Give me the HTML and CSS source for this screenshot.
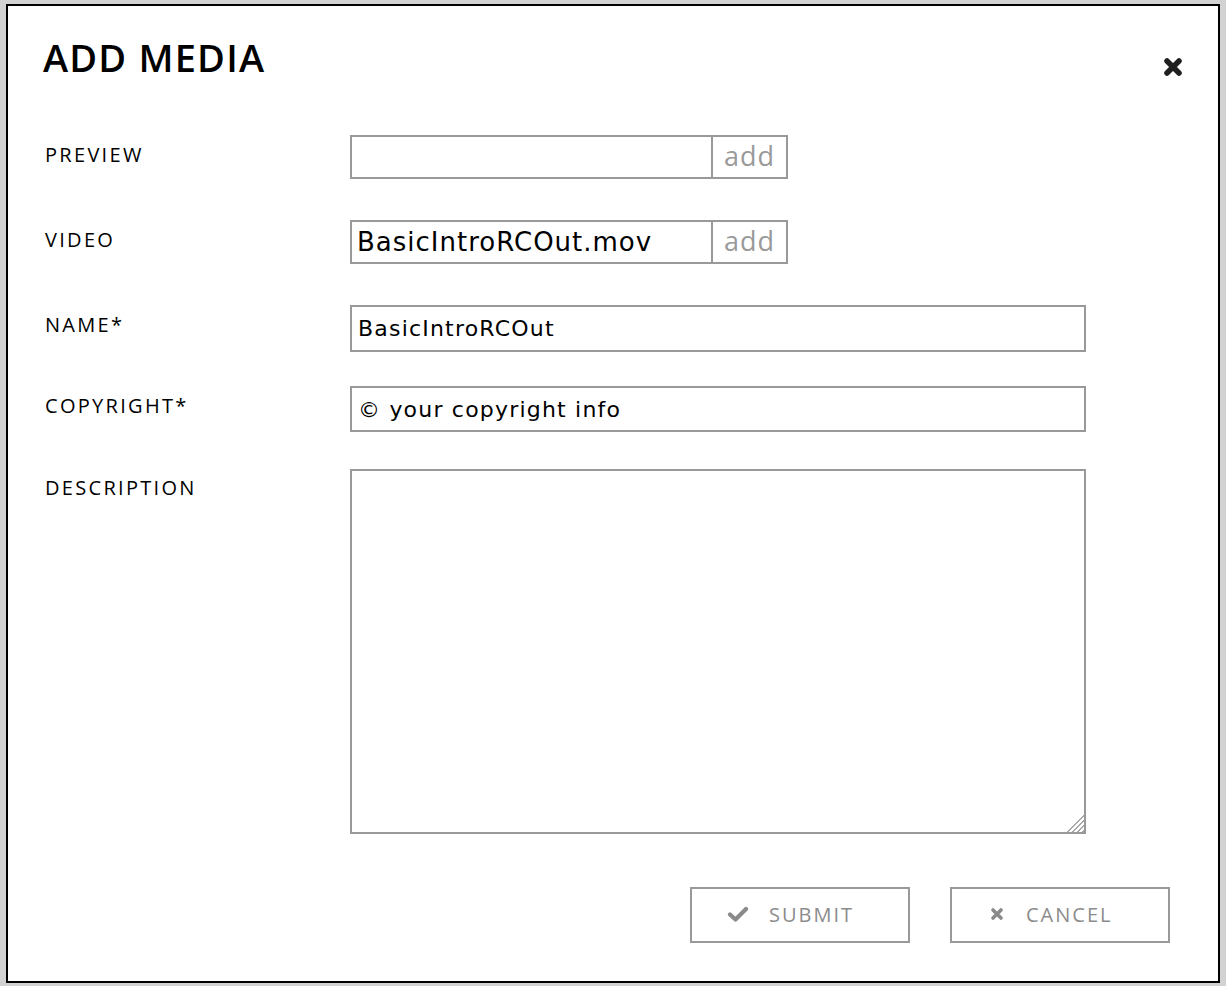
FILE: index.html
```html
<!DOCTYPE html>
<html>
<head>
<meta charset="utf-8">
<title>Add Media</title>
<link rel="stylesheet" href="styles.css">
</head>
<body>
<div class="modal">
  <div class="modal-header">
    <h1 class="title">ADD MEDIA</h1>
    <button class="close" aria-label="Close">
      <svg width="20" height="20" viewBox="0 0 20 20"><path d="M4 4 L16 16 M16 4 L4 16" stroke="#1f1f1f" stroke-width="5.5" stroke-linecap="round"/></svg>
    </button>
  </div>
  <form class="form">
    <div class="row">
      <label class="label">PREVIEW</label>
      <div class="file-field">
        <input class="file-input" type="text" value="">
        <span class="add-btn">add</span>
      </div>
    </div>
    <div class="row">
      <label class="label">VIDEO</label>
      <div class="file-field">
        <input class="file-input" type="text" value="BasicIntroRCOut.mov">
        <span class="add-btn">add</span>
      </div>
    </div>
    <div class="row row-name">
      <label class="label">NAME*</label>
      <input class="text-input" type="text" value="BasicIntroRCOut">
    </div>
    <div class="row row-copy">
      <label class="label">COPYRIGHT*</label>
      <input class="text-input" type="text" value="© your copyright info">
    </div>
    <div class="row row-desc">
      <label class="label label-desc">DESCRIPTION</label>
      <div class="textarea-wrap">
        <textarea class="textarea"></textarea>
        <span class="grip"></span>
      </div>
    </div>
    <div class="actions">
      <button type="button" class="btn btn-submit">
        <svg class="btn-icon" width="22" height="16" viewBox="0 0 22 16"><path d="M3 8.5 L8.5 13.5 L19 3" fill="none" stroke="#8a8a8a" stroke-width="4.2" stroke-linecap="round" stroke-linejoin="round"/></svg>
        <span>SUBMIT</span>
      </button>
      <button type="button" class="btn btn-cancel">
        <svg class="btn-icon" width="14" height="14" viewBox="0 0 14 14"><path d="M3 3 L11 11 M11 3 L3 11" stroke="#8a8a8a" stroke-width="3.6" stroke-linecap="round"/></svg>
        <span>CANCEL</span>
      </button>
    </div>
  </form>
</div>
</body>
</html>
```
FILE: styles.css
```css
html, body {
  margin: 0;
  padding: 0;
}
body {
  background: #d2d2d2;
  padding: 4px 6px 3px 6px;
  font-family: "Open Sans", "DejaVu Sans", sans-serif;
}
.modal {
  box-sizing: border-box;
  width: 1214px;
  height: 979px;
  background: #fff;
  border: 2px solid #000;
  display: flex;
  flex-direction: column;
}
.modal-header {
  display: flex;
  justify-content: space-between;
  align-items: flex-start;
  padding: 28px 35px 0 35px;
  height: 99px;
  box-sizing: border-box;
}
.title {
  margin: 0;
  font-family: "Open Sans", sans-serif;
  font-weight: 600;
  font-size: 38px;
  line-height: 46px;
  letter-spacing: 1.2px;
  color: #000;
}
.close {
  border: 0;
  background: none;
  padding: 0;
  margin-top: 23px;
  width: 20px;
  height: 20px;
  cursor: pointer;
}
.close svg { display: block; }
.form {
  display: flex;
  flex-direction: column;
  padding: 30px 0 0 37px;
}
.row {
  display: flex;
  align-items: flex-start;
  margin-bottom: 41px;
}
.row-name { margin-bottom: 34px; }
.row-copy { margin-bottom: 37px; }
.row-desc { margin-bottom: 53px; }
.label {
  width: 305px;
  flex: none;
  font-family: "Open Sans", sans-serif;
  font-size: 20px;
  line-height: 24px;
  letter-spacing: 2.3px;
  color: #000;
  padding-top: 8px;
}
.label-desc { padding-top: 7px; }
.file-field {
  display: flex;
  height: 44px;
}
.file-input {
  box-sizing: border-box;
  width: 363px;
  height: 44px;
  border: 2px solid #999;
  margin: 0;
  padding: 0 5px;
  font-family: "DejaVu Sans", sans-serif;
  font-size: 26px;
  letter-spacing: 1px;
  color: #000;
  outline: none;
}
.add-btn {
  box-sizing: border-box;
  width: 75px;
  height: 44px;
  border: 2px solid #999;
  border-left: 0;
  display: flex;
  align-items: center;
  justify-content: center;
  font-family: "Open Sans", sans-serif;
  font-size: 27px;
  letter-spacing: 1px;
  color: #999;
  padding-bottom: 3px;
}
.text-input {
  box-sizing: border-box;
  width: 736px;
  height: 47px;
  border: 2px solid #999;
  margin: 0;
  padding: 0 6px;
  font-family: "DejaVu Sans", sans-serif;
  font-size: 22px;
  letter-spacing: 1.2px;
  color: #000;
  outline: none;
}
.row-copy .text-input { height: 46px; }
.textarea-wrap {
  position: relative;
  width: 736px;
  height: 365px;
}
.textarea {
  box-sizing: border-box;
  display: block;
  width: 736px;
  height: 365px;
  border: 2px solid #999;
  margin: 0;
  resize: none;
  outline: none;
}
.grip {
  position: absolute;
  right: 2px;
  bottom: 2px;
  width: 20px;
  height: 20px;
  background: repeating-linear-gradient(135deg, transparent 0 2px, #a8a8a8 2px 3.5px);
  clip-path: polygon(100% 0, 100% 100%, 0 100%);
}
.actions {
  display: flex;
  justify-content: flex-end;
  gap: 40px;
  padding-right: 48px;
}
.btn {
  box-sizing: border-box;
  width: 220px;
  height: 56px;
  border: 2px solid #999;
  background: #fff;
  display: flex;
  align-items: center;
  justify-content: flex-start;
  font-family: "Open Sans", sans-serif;
  font-size: 20px;
  letter-spacing: 2px;
  color: #8c8c8c;
  padding: 0 0 2px 0;
  cursor: pointer;
}
.btn-submit {
  padding-left: 35px;
  gap: 20px;
}
.btn-cancel {
  padding-left: 38px;
  gap: 22px;
}
.btn-icon { display: block; }
```
